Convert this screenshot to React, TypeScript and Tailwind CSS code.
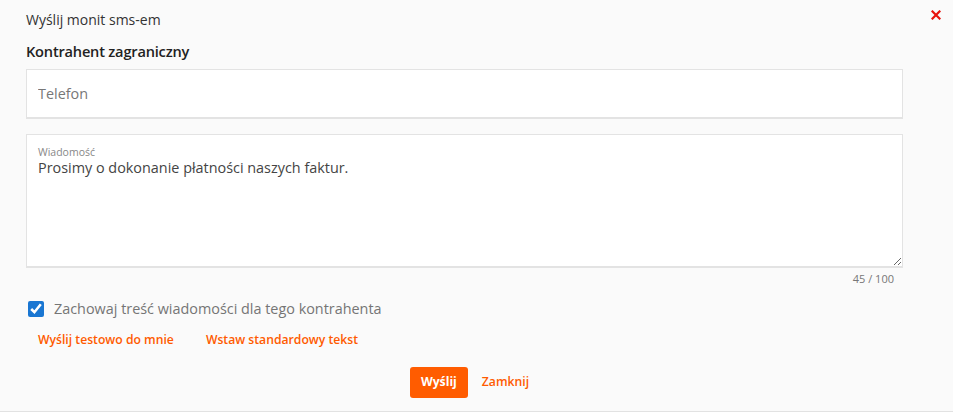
import { useState } from 'react';

export default function App() {
  const [msg, setMsg] = useState('Prosimy o dokonanie płatności naszych faktur.');
  const [keep, setKeep] = useState(true);

  return (
    <div
      className="relative h-[412px] w-[953px] overflow-hidden border-b border-[#e2e2e2] bg-[#fafafa] text-[#333]"
      style={{ fontFamily: '"Open Sans", "Noto Sans", sans-serif' }}
    >
      <button
        type="button"
        aria-label="Zamknij"
        className="absolute right-[11px] top-[9px] flex h-[12px] w-[12px] items-center justify-center"
      >
        <svg viewBox="0 0 10 10" className="h-[10px] w-[10px]">
          <path d="M1.5 1.5 L8.5 8.5 M8.5 1.5 L1.5 8.5" stroke="#e8130c" strokeWidth="2.2" strokeLinecap="square" />
        </svg>
      </button>

      <div className="flex flex-col px-[26px] pr-[50px] pt-[10px]">
        <div className="text-[14px] leading-[20px] text-[#333]">Wyślij monit sms-em</div>
        <div className="mt-[11px] text-[14.6px] font-semibold leading-[20px] tracking-[-0.2px] text-[#222]">Kontrahent zagraniczny</div>

        <input
          placeholder="Telefon"
          className="mt-[8px] h-[50px] w-full border border-b-2 border-[#e3e3e3] bg-white px-[11px] text-[14.4px] text-[#444] outline-none placeholder:text-[#777]"
        />

        <div className="mt-[15px] flex h-[134px] flex-col border border-b-2 border-[#e3e3e3] bg-white pl-[11px] pt-[10px]">
          <label className="text-[10.5px] leading-[14px] text-[#888]">Wiadomość</label>
          <textarea
            value={msg}
            onChange={(e) => setMsg(e.target.value)}
            maxLength={100}
            className="-mt-[1px] flex-1 resize-y bg-transparent text-[14.4px] leading-[20px] text-[#444] outline-none"
          />
        </div>
        <div className="mt-[4px] pr-[9px] text-right text-[11px] leading-[14px] text-[#777]">{msg.length} / 100</div>

        <label className="mt-[13px] flex items-center gap-[10px] pl-[2px]">
          <input
            type="checkbox"
            checked={keep}
            onChange={(e) => setKeep(e.target.checked)}
            className="h-[16px] w-[16px] accent-[#1976d2]"
          />
          <span className="text-[14.4px] leading-[20px] text-[#757575]">Zachowaj treść wiadomości dla tego kontrahenta</span>
        </label>

        <div className="mt-[11px] flex gap-[32px] pl-[12px]">
          <button type="button" className="text-[12.2px] font-semibold leading-[20px] text-[#ff5a00]">Wyślij testowo do mnie</button>
          <button type="button" className="text-[12.2px] font-semibold leading-[20px] text-[#ff5a00]">Wstaw standardowy tekst</button>
        </div>

        <div className="mt-[17px] flex items-center justify-center gap-[14px] pl-[10px]">
          <button type="button" className="h-[31px] rounded-[3px] bg-[#ff5c00] px-[11px] text-[12.2px] font-bold text-white">Wyślij</button>
          <button type="button" className="text-[12.2px] font-semibold text-[#ff5a00]">Zamknij</button>
        </div>
      </div>
    </div>
  );
}
